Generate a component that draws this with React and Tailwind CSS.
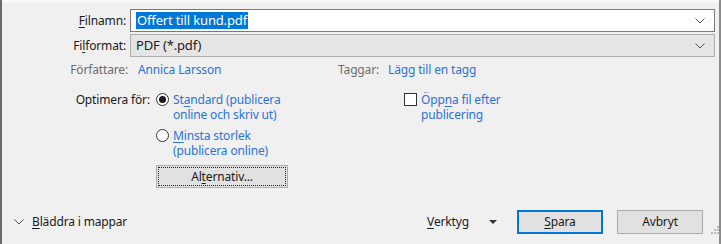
import React from "react";

const Chevron = ({ className = "" }) => (
  <svg width="10" height="6" viewBox="0 0 10 6" className={className}>
    <path d="M0.5 0.5 L5 5 L9.5 0.5" fill="none" stroke="#505050" strokeWidth="1" />
  </svg>
);

const U = ({ children }) => <span className="underline underline-offset-2">{children}</span>;

const Radio = ({ checked }) => (
  <span className="w-[13px] h-[13px] rounded-full border border-[#333] bg-white flex items-center justify-center shrink-0 mt-[1px]">
    {checked && <span className="w-[7px] h-[7px] rounded-full bg-[#1a1a1a]" />}
  </span>
);

export default function App() {
  return (
    <div
      className="w-[721px] h-[244px] bg-[#f0f0f0] border-l-2 border-r-2 border-l-[#6a6a6a] border-r-[#8a8a8a] flex flex-col text-[12px] tracking-[-0.15px] text-[#1a1a1a] overflow-hidden"
      style={{ fontFamily: '"Noto Sans", "Liberation Sans", sans-serif' }}
    >
      <div className="h-[3px] bg-[#f8f8f8] shrink-0" />

      {/* Filnamn */}
      <div className="flex items-center mt-[6px] h-[23px]">
        <div className="w-[124px] text-right">
          <U>F</U>ilnamn:
        </div>
        <div className="ml-[4px] w-[585px] h-[23px] border border-[#7a7a7a] bg-white flex items-center pl-[5px] pr-[9px]">
          <span className="bg-[#0078d7] text-white text-[13px] leading-[17px] px-[1px]">Offert till kund.pdf</span>
          <span className="flex-1" />
          <Chevron />
        </div>
      </div>

      {/* Filformat */}
      <div className="flex items-center mt-[2px] h-[23px]">
        <div className="w-[124px] text-right">
          Fi<U>l</U>format:
        </div>
        <div className="ml-[4px] w-[585px] h-[23px] border border-[#adadad] bg-[#e5e5e5] flex items-center pl-[5px] pr-[9px]">
          <span className="text-[13px]">PDF (*.pdf)</span>
          <span className="flex-1" />
          <Chevron />
        </div>
      </div>

      {/* Metadata */}
      <div className="flex items-center mt-[5px] h-[16px]">
        <div className="w-[126px] text-right text-[#6d6d6d]">Författare:</div>
        <div className="ml-[10px] w-[200px] text-[#2b73d5]">Annica Larsson</div>
        <div className="w-[50px] text-[#6d6d6d]">Taggar:</div>
        <div className="text-[#2b73d5]">Lägg till en tagg</div>
      </div>

      {/* Optimera */}
      <div className="flex mt-[14px]">
        <div className="w-[148px] text-right leading-[15px]">Optimera för:</div>
        <div className="ml-[6px] w-[245px] flex flex-col">
          <div className="flex gap-[4px]">
            <Radio checked />
            <div className="text-[#2b73d5] leading-[15px]">
              St<U>a</U>ndard (publicera
              <br />
              online och skriv ut)
            </div>
          </div>
          <div className="flex gap-[4px] mt-[6px]">
            <Radio />
            <div className="text-[#2b73d5] leading-[15px]">
              <U>M</U>insta storlek
              <br />
              (publicera online)
            </div>
          </div>
          <div className="mt-[7px] w-[132px] h-[23px] border border-[#adadad] bg-[#e1e1e1] p-[1px]">
            <div className="w-full h-full border border-dotted border-[#222] flex items-center justify-center">
              Al<U>t</U>ernativ...
            </div>
          </div>
        </div>
        <div className="ml-[3px] flex gap-[4px]">
          <span className="w-[13px] h-[13px] border border-[#333] bg-white shrink-0 mt-[1px]" />
          <div className="text-[#2b73d5] leading-[15px]">
            Öpp<U>n</U>a fil efter
            <br />
            publicering
          </div>
        </div>
      </div>

      {/* Bottom */}
      <div className="flex items-center mt-auto mb-[10px] h-[24px]">
        <div className="ml-[12px] flex items-center gap-[8px]">
          <Chevron />
          <span>
            <U>B</U>läddra i mappar
          </span>
        </div>
        <div className="flex-1" />
        <span>
          <U>V</U>erktyg
        </span>
        <svg width="8" height="4" viewBox="0 0 8 4" className="ml-[20px]">
          <path d="M0 0 L8 0 L4 4 Z" fill="#333" />
        </svg>
        <div className="ml-[20px] w-[86px] h-[24px] border-2 border-[#0078d7] bg-[#e1e1e1] flex items-center justify-center">
          <span>
            <U>S</U>para
          </span>
        </div>
        <div className="ml-[14px] w-[86px] h-[24px] border border-[#adadad] bg-[#e1e1e1] flex items-center justify-center">
          Avbryt
        </div>
        <div className="w-[16px] h-[24px] flex items-end justify-end">
          <svg width="8" height="8" viewBox="0 0 8 8">
            <rect x="6" y="0" width="2" height="2" fill="#b8b8b8" />
            <rect x="3" y="3" width="2" height="2" fill="#b8b8b8" />
            <rect x="6" y="3" width="2" height="2" fill="#b8b8b8" />
            <rect x="0" y="6" width="2" height="2" fill="#b8b8b8" />
            <rect x="3" y="6" width="2" height="2" fill="#b8b8b8" />
            <rect x="6" y="6" width="2" height="2" fill="#b8b8b8" />
          </svg>
        </div>
      </div>
    </div>
  );
}
